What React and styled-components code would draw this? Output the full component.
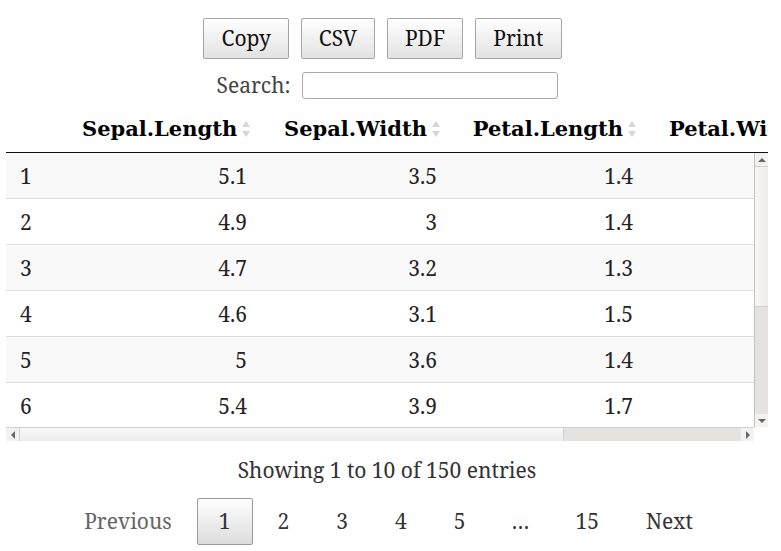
import React from "react";
import styled, { createGlobalStyle } from "styled-components";

const GlobalStyle = createGlobalStyle`
  html, body {
    margin: 0;
    padding: 0;
    background: #fff;
  }
  body {
    font-family: "Noto Serif", "Liberation Serif", serif;
    font-size: 21px;
    line-height: 25px;
    color: #333;
  }
`;

const Page = styled.div`
  width: 762px;
  margin-left: 6px;
  padding-top: 18px;
  display: flex;
  flex-direction: column;
  align-items: center;
`;

const ButtonBar = styled.div`
  display: flex;
  gap: 12px;
  padding-right: 9px;
`;

const ExportBtn = styled.button`
  font: inherit;
  line-height: 25px;
  color: #111;
  padding: 7px 17px;
  border: 1px solid #a6a6a6;
  border-radius: 2px;
  background: linear-gradient(to bottom, #ffffff 0%, #e2e2e2 100%);
  cursor: pointer;
`;

const SearchRow = styled.label`
  display: flex;
  align-items: center;
  gap: 11px;
  margin-top: 13px;
  color: #444;
`;

const SearchInput = styled.input`
  width: 256px;
  height: 27px;
  box-sizing: border-box;
  border: 1px solid #aaa;
  border-radius: 3px;
  padding: 2px 6px;
  font: inherit;
  font-size: 16px;
`;

const HeadScroll = styled.div`
  width: 762px;
  overflow: hidden;
  margin-top: 7px;
`;

/* scroll area: viewport + drawn scrollbars laid out on a grid */
const ScrollFrame = styled.div`
  width: 762px;
  height: 288px;
  display: grid;
  grid-template-columns: 1fr 14px;
  grid-template-rows: 1fr 14px;
`;

const Viewport = styled.div`
  overflow: hidden;
`;

const VBar = styled.div`
  display: flex;
  flex-direction: column;
  border-left: 1px solid #c2c2c2;
  background: #e5e2df;
`;

const HBar = styled.div`
  display: flex;
  border-top: 1px solid #d0d0d0;
  background: #e5e2df;
`;

const Corner = styled.div`
  background: #fff;
`;

const ArrowBtn = styled.div`
  flex: 0 0 13px;
  display: flex;
  align-items: center;
  justify-content: center;
  background: #f3f2f0;
  ${(p) => p.$edge && `border-${p.$edge}: 1px solid #cfcfcf;`}
`;

const Thumb = styled.div`
  flex: 0 0 ${(p) => p.$size}px;
  background: ${(p) =>
    p.$vertical
      ? "linear-gradient(to right, #f7f6f5, #efedeb)"
      : "linear-gradient(to bottom, #f9f8f7, #efedeb)"};
  ${(p) => (p.$vertical ? "border-bottom" : "border-right")}: 1px solid #cfcfcf;
`;

const Track = styled.div`
  flex: 1;
`;

const Table = styled.table`
  width: 992px;
  table-layout: fixed;
  border-collapse: separate;
  border-spacing: 0;
`;

const HeadCell = styled.th`
  font-family: "DejaVu Serif", serif;
  font-weight: bold;
  color: #000;
  white-space: nowrap;
  overflow: hidden;
  text-align: ${(p) => (p.$right ? "right" : "left")};
  padding: 10px 10px 11px 14px;
  border-bottom: 1px solid #111;
`;

const SortIcon = styled.svg`
  width: 10px;
  height: 20px;
  margin-left: 4px;
  vertical-align: -3px;
`;

const Row = styled.tr`
  background: ${(p) => (p.$odd ? "#f9f9f9" : "#fff")};
  & + tr td {
    border-top: 1px solid #ddd;
  }
`;

const Cell = styled.td`
  padding: 11px 14px 9px;
  color: #222;
  white-space: nowrap;
  text-align: ${(p) => (p.$right ? "right" : "left")};
`;

const Info = styled.div`
  margin-top: 17px;
  color: #333;
`;

const Pager = styled.div`
  display: flex;
  align-items: center;
  margin-top: 15px;
  padding-left: 3px;
`;

const PageBtn = styled.span`
  box-sizing: border-box;
  padding: 10px 21px;
  margin-left: 3px;
  border: 1px solid ${(p) => (p.$current ? "#9a9a9a" : "transparent")};
  border-radius: 2px;
  color: ${(p) => (p.$disabled ? "#666" : "#333")};
  background: ${(p) =>
    p.$current ? "linear-gradient(to bottom, #ffffff 0%, #dcdcdc 100%)" : "transparent"};
  &:first-child {
    margin-left: 0;
  }
`;

const Ellipsis = styled.span`
  padding: 0 21px;
  margin-left: 3px;
  color: #333;
`;

const columns = [
  { key: "row", label: "", width: 62 },
  { key: "sl", label: "Sepal.Length", width: 193, right: true },
  { key: "sw", label: "Sepal.Width", width: 190, right: true },
  { key: "pl", label: "Petal.Length", width: 196, right: true },
  { key: "pw", label: "Petal.Width", width: 184, right: true },
  { key: "sp", label: "Species", width: 167 },
];

const rows = [
  [1, 5.1, 3.5, 1.4, 0.2, "setosa"],
  [2, 4.9, 3, 1.4, 0.2, "setosa"],
  [3, 4.7, 3.2, 1.3, 0.2, "setosa"],
  [4, 4.6, 3.1, 1.5, 0.2, "setosa"],
  [5, 5, 3.6, 1.4, 0.2, "setosa"],
  [6, 5.4, 3.9, 1.7, 0.4, "setosa"],
  [7, 4.6, 3.4, 1.4, 0.3, "setosa"],
  [8, 5, 3.4, 1.5, 0.2, "setosa"],
  [9, 4.4, 2.9, 1.4, 0.2, "setosa"],
  [10, 4.9, 3.1, 1.5, 0.1, "setosa"],
];

const Sort = () => (
  <SortIcon viewBox="0 0 10 20">
    <polygon points="5,2 9,8 1,8" fill="#d6d6d6" />
    <polygon points="1,12 9,12 5,18" fill="#d6d6d6" />
  </SortIcon>
);

const Arrow = ({ dir }) => {
  const pts = {
    up: "0,4 4,0 8,4",
    down: "0,0 8,0 4,4",
    left: "4,0 4,8 0,4",
    right: "0,0 0,8 4,4",
  }[dir];
  const vert = dir === "up" || dir === "down";
  return (
    <svg width={vert ? 8 : 4} height={vert ? 4 : 8} viewBox={vert ? "0 0 8 4" : "0 0 4 8"}>
      <polygon points={pts} fill="#666" />
    </svg>
  );
};

const ColGroup = () => (
  <colgroup>
    {columns.map((c) => (
      <col key={c.key} style={{ width: c.width }} />
    ))}
  </colgroup>
);

export default function App() {
  return (
    <>
      <GlobalStyle />
      <Page>
        <ButtonBar>
          <ExportBtn type="button">Copy</ExportBtn>
          <ExportBtn type="button">CSV</ExportBtn>
          <ExportBtn type="button">PDF</ExportBtn>
          <ExportBtn type="button">Print</ExportBtn>
        </ButtonBar>
        <SearchRow>
          Search:
          <SearchInput type="search" />
        </SearchRow>
        <HeadScroll>
          <Table>
            <ColGroup />
            <thead>
              <tr>
                {columns.map((c) => (
                  <HeadCell key={c.key} $right={c.right}>
                    {c.label}
                    {c.label && <Sort />}
                  </HeadCell>
                ))}
              </tr>
            </thead>
          </Table>
        </HeadScroll>
        <ScrollFrame>
          <Viewport>
            <Table>
              <ColGroup />
              <tbody>
                {rows.map((r, i) => (
                  <Row key={r[0]} $odd={i % 2 === 0}>
                    {r.map((v, j) => (
                      <Cell key={j} $right={columns[j].right}>
                        {v}
                      </Cell>
                    ))}
                  </Row>
                ))}
              </tbody>
            </Table>
          </Viewport>
          <VBar>
            <ArrowBtn $edge="bottom">
              <Arrow dir="up" />
            </ArrowBtn>
            <Thumb $vertical $size={139} />
            <Track />
            <ArrowBtn>
              <Arrow dir="down" />
            </ArrowBtn>
          </VBar>
          <HBar>
            <ArrowBtn $edge="right">
              <Arrow dir="left" />
            </ArrowBtn>
            <Thumb $size={543} />
            <Track />
            <ArrowBtn>
              <Arrow dir="right" />
            </ArrowBtn>
          </HBar>
          <Corner />
        </ScrollFrame>
        <Info>Showing 1 to 10 of 150 entries</Info>
        <Pager>
          <PageBtn $disabled>Previous</PageBtn>
          <PageBtn $current>1</PageBtn>
          <PageBtn>2</PageBtn>
          <PageBtn>3</PageBtn>
          <PageBtn>4</PageBtn>
          <PageBtn>5</PageBtn>
          <Ellipsis>…</Ellipsis>
          <PageBtn>15</PageBtn>
          <PageBtn>Next</PageBtn>
        </Pager>
      </Page>
    </>
  );
}
